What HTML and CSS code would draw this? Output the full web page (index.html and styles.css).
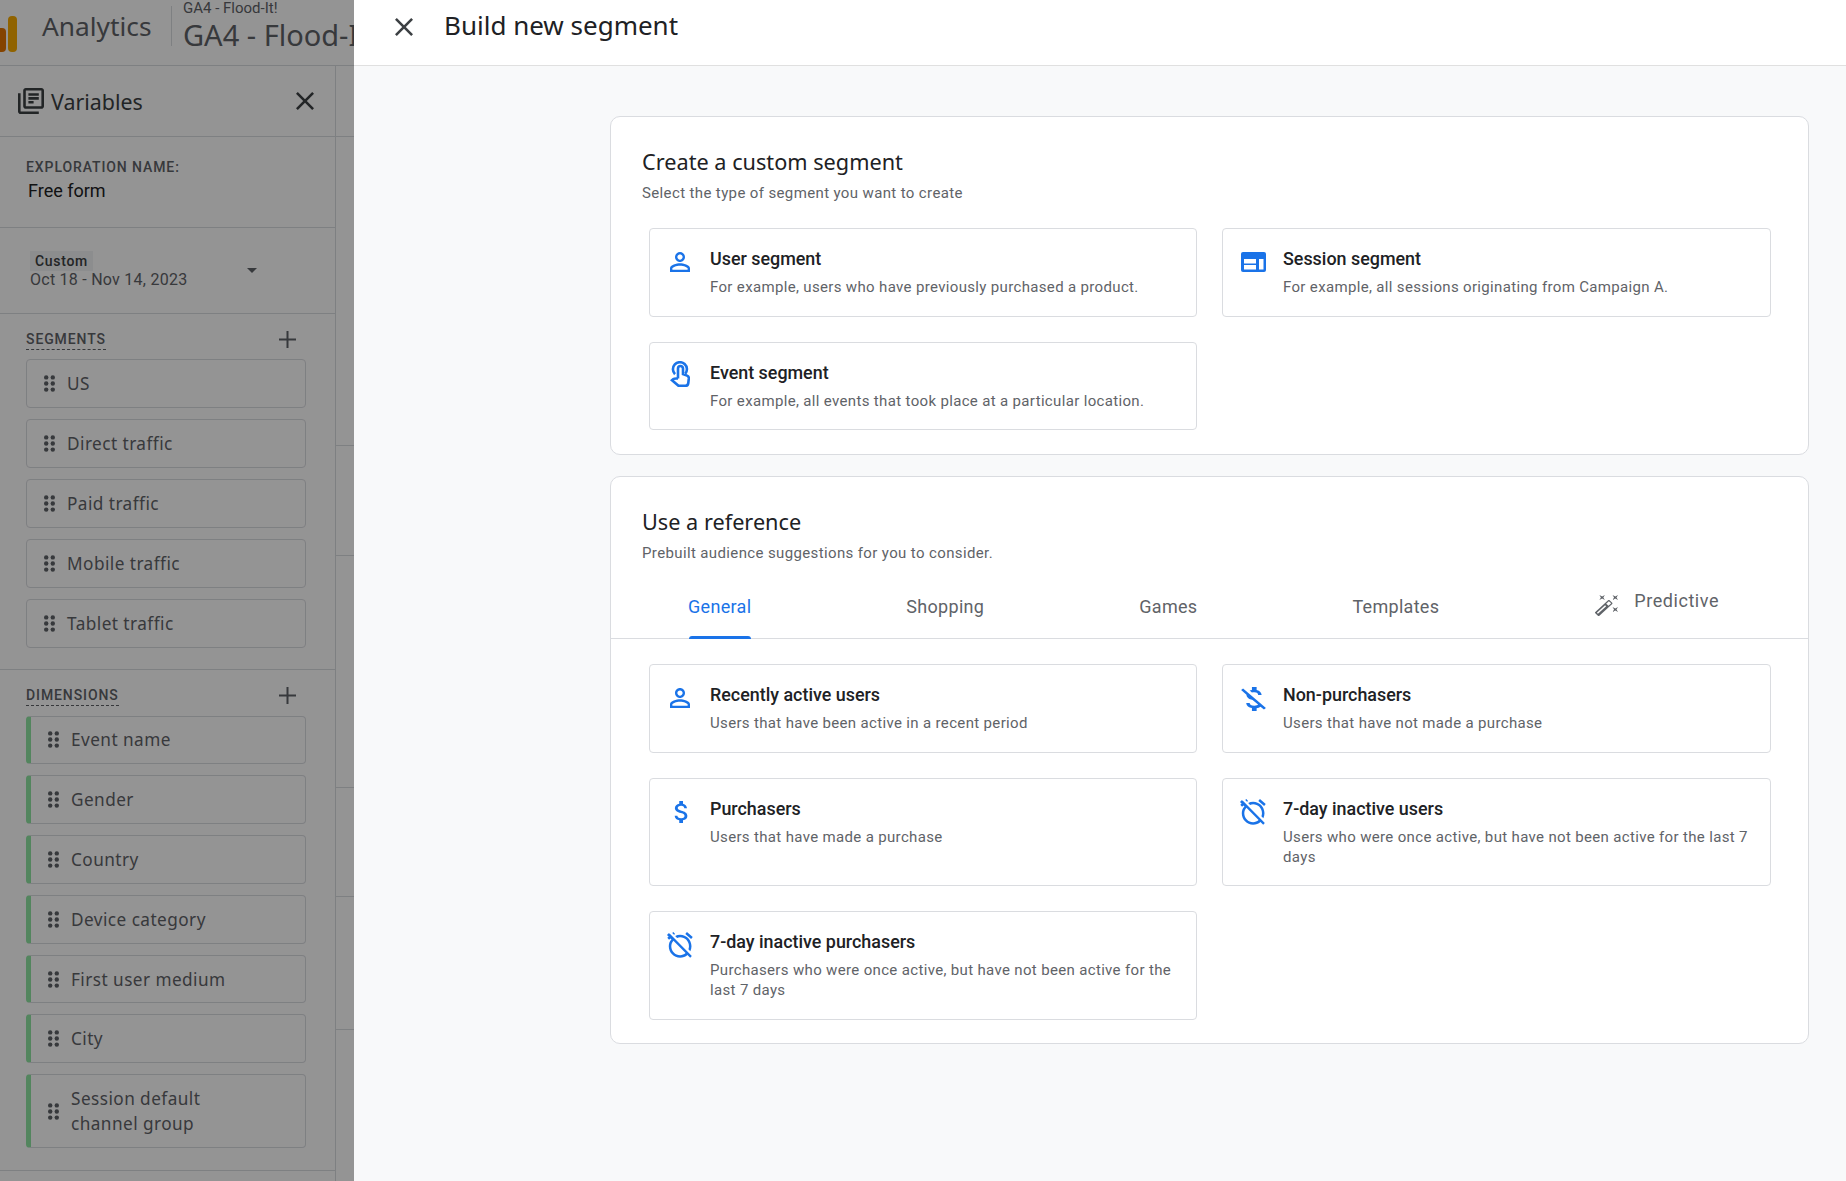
FILE: index.html
```html
<!DOCTYPE html>
<html lang="en">
<head>
<meta charset="utf-8">
<title>Build new segment</title>
<link rel="stylesheet" href="styles.css">
</head>
<body>
<div class="app">
  <div class="under">
    <header class="topbar">
      <div class="logo"><span class="bar bar-a"></span><span class="bar bar-b"></span></div>
      <span class="brand">Analytics</span>
      <div class="account">
        <span class="acc-small">GA4 - Flood-It!</span>
        <span class="acc-big">GA4 - Flood-It!</span>
      </div>
    </header>
    <div class="rail-wrap">
      <aside class="vars">
        <div class="vars-head">
          <svg class="ic-lib" viewBox="2 2 20 20"><path d="M4 6H2v14c0 1.1.9 2 2 2h14v-2H4V6zm16-4H8c-1.1 0-2 .9-2 2v12c0 1.1.9 2 2 2h12c1.1 0 2-.9 2-2V4c0-1.1-.9-2-2-2zm0 14H8V4h12v12zM10 9h8v2h-8zm0 3h4v2h-4zm0-6h8v2h-8z"/></svg>
          <span class="vars-title">Variables</span>
          <svg class="ic-x" viewBox="5 5 14 14"><path d="M19 6.41L17.59 5 12 10.59 6.41 5 5 6.41 10.59 12 5 17.59 6.41 19 12 13.41 17.59 19 19 17.59 13.41 12z"/></svg>
        </div>
        <div class="name-block">
          <div class="caps">EXPLORATION NAME:</div>
          <div class="name-val">Free form</div>
        </div>
        <div class="date-block">
          <div class="date-text">
            <span class="chip">Custom</span>
            <span class="date-val">Oct 18 - Nov 14, 2023</span>
          </div>
          <span class="caret"></span>
        </div>
        <section class="sect">
          <div class="sect-head">
            <span class="caps dashed">SEGMENTS</span>
            <svg class="ic-plus" viewBox="0 0 17 17"><path d="M7.5 0h2v7.5H17v2H9.5V17h-2V9.5H0v-2h7.5z"/></svg>
          </div>
          <div class="rows">
            <div class="row"><svg class="dots" viewBox="0 0 11 17"><circle cx="2.2" cy="2.4" r="2.2"/><circle cx="8.8" cy="2.4" r="2.2"/><circle cx="2.2" cy="8.5" r="2.2"/><circle cx="8.8" cy="8.5" r="2.2"/><circle cx="2.2" cy="14.6" r="2.2"/><circle cx="8.8" cy="14.6" r="2.2"/></svg><span class="row-t">US</span></div>
            <div class="row"><svg class="dots" viewBox="0 0 11 17"><circle cx="2.2" cy="2.4" r="2.2"/><circle cx="8.8" cy="2.4" r="2.2"/><circle cx="2.2" cy="8.5" r="2.2"/><circle cx="8.8" cy="8.5" r="2.2"/><circle cx="2.2" cy="14.6" r="2.2"/><circle cx="8.8" cy="14.6" r="2.2"/></svg><span class="row-t">Direct traffic</span></div>
            <div class="row"><svg class="dots" viewBox="0 0 11 17"><circle cx="2.2" cy="2.4" r="2.2"/><circle cx="8.8" cy="2.4" r="2.2"/><circle cx="2.2" cy="8.5" r="2.2"/><circle cx="8.8" cy="8.5" r="2.2"/><circle cx="2.2" cy="14.6" r="2.2"/><circle cx="8.8" cy="14.6" r="2.2"/></svg><span class="row-t">Paid traffic</span></div>
            <div class="row"><svg class="dots" viewBox="0 0 11 17"><circle cx="2.2" cy="2.4" r="2.2"/><circle cx="8.8" cy="2.4" r="2.2"/><circle cx="2.2" cy="8.5" r="2.2"/><circle cx="8.8" cy="8.5" r="2.2"/><circle cx="2.2" cy="14.6" r="2.2"/><circle cx="8.8" cy="14.6" r="2.2"/></svg><span class="row-t">Mobile traffic</span></div>
            <div class="row"><svg class="dots" viewBox="0 0 11 17"><circle cx="2.2" cy="2.4" r="2.2"/><circle cx="8.8" cy="2.4" r="2.2"/><circle cx="2.2" cy="8.5" r="2.2"/><circle cx="8.8" cy="8.5" r="2.2"/><circle cx="2.2" cy="14.6" r="2.2"/><circle cx="8.8" cy="14.6" r="2.2"/></svg><span class="row-t">Tablet traffic</span></div>
          </div>
        </section>
        <section class="sect sect-dim">
          <div class="sect-head">
            <span class="caps dashed">DIMENSIONS</span>
            <svg class="ic-plus" viewBox="0 0 17 17"><path d="M7.5 0h2v7.5H17v2H9.5V17h-2V9.5H0v-2h7.5z"/></svg>
          </div>
          <div class="rows">
            <div class="row dim"><svg class="dots" viewBox="0 0 11 17"><circle cx="2.2" cy="2.4" r="2.2"/><circle cx="8.8" cy="2.4" r="2.2"/><circle cx="2.2" cy="8.5" r="2.2"/><circle cx="8.8" cy="8.5" r="2.2"/><circle cx="2.2" cy="14.6" r="2.2"/><circle cx="8.8" cy="14.6" r="2.2"/></svg><span class="row-t">Event name</span></div>
            <div class="row dim"><svg class="dots" viewBox="0 0 11 17"><circle cx="2.2" cy="2.4" r="2.2"/><circle cx="8.8" cy="2.4" r="2.2"/><circle cx="2.2" cy="8.5" r="2.2"/><circle cx="8.8" cy="8.5" r="2.2"/><circle cx="2.2" cy="14.6" r="2.2"/><circle cx="8.8" cy="14.6" r="2.2"/></svg><span class="row-t">Gender</span></div>
            <div class="row dim"><svg class="dots" viewBox="0 0 11 17"><circle cx="2.2" cy="2.4" r="2.2"/><circle cx="8.8" cy="2.4" r="2.2"/><circle cx="2.2" cy="8.5" r="2.2"/><circle cx="8.8" cy="8.5" r="2.2"/><circle cx="2.2" cy="14.6" r="2.2"/><circle cx="8.8" cy="14.6" r="2.2"/></svg><span class="row-t">Country</span></div>
            <div class="row dim"><svg class="dots" viewBox="0 0 11 17"><circle cx="2.2" cy="2.4" r="2.2"/><circle cx="8.8" cy="2.4" r="2.2"/><circle cx="2.2" cy="8.5" r="2.2"/><circle cx="8.8" cy="8.5" r="2.2"/><circle cx="2.2" cy="14.6" r="2.2"/><circle cx="8.8" cy="14.6" r="2.2"/></svg><span class="row-t">Device category</span></div>
            <div class="row dim"><svg class="dots" viewBox="0 0 11 17"><circle cx="2.2" cy="2.4" r="2.2"/><circle cx="8.8" cy="2.4" r="2.2"/><circle cx="2.2" cy="8.5" r="2.2"/><circle cx="8.8" cy="8.5" r="2.2"/><circle cx="2.2" cy="14.6" r="2.2"/><circle cx="8.8" cy="14.6" r="2.2"/></svg><span class="row-t">First user medium</span></div>
            <div class="row dim"><svg class="dots" viewBox="0 0 11 17"><circle cx="2.2" cy="2.4" r="2.2"/><circle cx="8.8" cy="2.4" r="2.2"/><circle cx="2.2" cy="8.5" r="2.2"/><circle cx="8.8" cy="8.5" r="2.2"/><circle cx="2.2" cy="14.6" r="2.2"/><circle cx="8.8" cy="14.6" r="2.2"/></svg><span class="row-t">City</span></div>
            <div class="row dim tall"><svg class="dots" viewBox="0 0 11 17"><circle cx="2.2" cy="2.4" r="2.2"/><circle cx="8.8" cy="2.4" r="2.2"/><circle cx="2.2" cy="8.5" r="2.2"/><circle cx="8.8" cy="8.5" r="2.2"/><circle cx="2.2" cy="14.6" r="2.2"/><circle cx="8.8" cy="14.6" r="2.2"/></svg><span class="row-t">Session default<br>channel group</span></div>
          </div>
        </section>
      </aside>
      <div class="stub">
        <div class="stub-cell s1"></div>
        <div class="stub-cell s2"></div>
        <div class="stub-cell s3"></div>
        <div class="stub-cell s4"></div>
        <div class="stub-cell s5"></div>
        <div class="stub-cell s6"></div>
      </div>
    </div>
  </div>
  <main class="sheet">
    <header class="sheet-head">
      <svg class="ic-close" viewBox="5 5 14 14"><path d="M19 6.41L17.59 5 12 10.59 6.41 5 5 6.41 10.59 12 5 17.59 6.41 19 12 13.41 17.59 19 19 17.59 13.41 12z"/></svg>
      <h1 class="sheet-title">Build new segment</h1>
    </header>
    <div class="sheet-body">
      <section class="panel">
        <div class="panel-head">
          <h2 class="panel-title">Create a custom segment</h2>
          <p class="panel-sub">Select the type of segment you want to create</p>
        </div>
        <div class="grid">
          <article class="card">
            <div class="icon-cell"><svg class="blue" width="20" height="20" viewBox="4 4 16 16"><path d="M12 5.9c1.16 0 2.1.94 2.1 2.1s-.94 2.1-2.1 2.1S9.9 9.16 9.9 8s.94-2.1 2.1-2.1m0 9c2.97 0 6.1 1.46 6.1 2.1v1.1H5.9V17c0-.64 3.13-2.1 6.1-2.1M12 4C9.79 4 8 5.79 8 8s1.79 4 4 4 4-1.79 4-4-1.79-4-4-4zm0 9c-2.67 0-8 1.34-8 4v3h16v-3c0-2.66-5.33-4-8-4z"/></svg></div>
            <div><h3 class="card-title">User segment</h3><p class="card-desc">For example, users who have previously purchased a product.</p></div>
          </article>
          <article class="card">
            <div class="icon-cell"><svg width="25" height="20" viewBox="0 0 25 20"><rect class="blue" width="25" height="20" rx="2"/><rect class="knock" x="3" y="7" width="12" height="4.5"/><rect class="knock" x="3" y="13" width="12" height="4.5"/><rect class="knock" x="18" y="7" width="4.5" height="10.5"/></svg></div>
            <div><h3 class="card-title">Session segment</h3><p class="card-desc">For example, all sessions originating from Campaign A.</p></div>
          </article>
          <article class="card">
            <div class="icon-cell up"><svg class="stroke" width="20" height="26" viewBox="0 0 20 26"><path d="M5 13.2A7 7 0 1 1 15.2 12.8"/><path d="M8 17.5V7.5a2.5 2.5 0 0 1 5 0V13l4 1.6c1.2.5 1.9 1.5 1.8 2.8l-.5 4.6c-.2 1.6-1.2 2.8-3 2.8H8.5L2 19.2l1.4-1.2c.9-.7 3-.5 4.6-.5"/></svg></div>
            <div><h3 class="card-title">Event segment</h3><p class="card-desc">For example, all events that took place at a particular location.</p></div>
          </article>
        </div>
      </section>
      <section class="panel panel-ref">
        <div class="panel-head">
          <h2 class="panel-title">Use a reference</h2>
          <p class="panel-sub">Prebuilt audience suggestions for you to consider.</p>
        </div>
        <nav class="tabs">
          <span class="tab active">General</span>
          <span class="tab">Shopping</span>
          <span class="tab">Games</span>
          <span class="tab">Templates</span>
          <span class="tab predictive">
            <svg class="ic-wand" viewBox="1 2 21 21" preserveAspectRatio="none"><path d="M7.5 5.6L10 7 8.6 4.5 10 2 7.5 3.4 5 2l1.4 2.5L5 7zm12 9.8L17 14l1.4 2.5L17 19l2.5-1.4L22 19l-1.4-2.5L22 14zM22 2l-2.5 1.4L17 2l1.4 2.5L17 7l2.5-1.4L22 7l-1.4-2.5zm-7.63 5.29c-.39-.39-1.02-.39-1.41 0L1.29 18.96c-.39.39-.39 1.02 0 1.41l2.34 2.34c.39.39 1.02.39 1.41 0L16.7 11.05c.39-.39.39-1.02 0-1.41l-2.33-2.35zM3.7 20.7l-1-1 7.5-7.5 1 1zM13.34 12.78l-2.12-2.12 2.44-2.44 2.12 2.12-2.44 2.44z"/></svg>
            <span class="pred-t">Predictive</span>
          </span>
        </nav>
        <div class="grid">
          <article class="card">
            <div class="icon-cell"><svg class="blue" width="20" height="20" viewBox="4 4 16 16"><path d="M12 5.9c1.16 0 2.1.94 2.1 2.1s-.94 2.1-2.1 2.1S9.9 9.16 9.9 8s.94-2.1 2.1-2.1m0 9c2.97 0 6.1 1.46 6.1 2.1v1.1H5.9V17c0-.64 3.13-2.1 6.1-2.1M12 4C9.79 4 8 5.79 8 8s1.79 4 4 4 4-1.79 4-4-1.79-4-4-4zm0 9c-2.67 0-8 1.34-8 4v3h16v-3c0-2.66-5.33-4-8-4z"/></svg></div>
            <div><h3 class="card-title">Recently active users</h3><p class="card-desc">Users that have been active in a recent period</p></div>
          </article>
          <article class="card">
            <div class="icon-cell p4"><svg class="blue" width="25" height="24" viewBox="4 3 16 18" preserveAspectRatio="none"><path d="M12.5 6.9c1.78 0 2.44.85 2.5 2.1h2.21c-.07-1.72-1.12-3.3-3.21-3.81V3h-3v2.16c-.53.12-1.03.3-1.48.54l1.47 1.47c.41-.17.91-.27 1.51-.27zM5.33 4.06L4.06 5.33 7.5 8.77c0 2.08 1.56 3.21 3.91 3.91l3.51 3.51c-.34.48-1.05.91-2.42.91-2.06 0-2.87-.92-2.98-2.1h-2.2c.12 2.19 1.76 3.42 3.68 3.83V21h3v-2.15c.96-.18 1.83-.55 2.46-1.12l2.22 2.22 1.27-1.27L5.33 4.06z"/></svg></div>
            <div><h3 class="card-title">Non-purchasers</h3><p class="card-desc">Users that have not made a purchase</p></div>
          </article>
          <article class="card">
            <div class="icon-cell p4"><svg class="blue" width="15" height="22" viewBox="5 3 12 18" preserveAspectRatio="none"><path d="M11.8 10.9c-2.27-.59-3-1.2-3-2.15 0-1.09 1.01-1.85 2.7-1.85 1.78 0 2.44.85 2.5 2.1h2.21c-.07-1.72-1.12-3.3-3.21-3.81V3h-3v2.16c-1.94.42-3.5 1.68-3.5 3.61 0 2.31 1.91 3.46 4.7 4.13 2.5.6 3 1.48 3 2.41 0 .69-.49 1.79-2.7 1.79-2.06 0-2.87-.92-2.98-2.1h-2.2c.12 2.19 1.76 3.42 3.68 3.83V21h3v-2.15c1.95-.37 3.5-1.5 3.5-3.55 0-2.84-2.43-3.81-4.7-4.4z"/></svg></div>
            <div><h3 class="card-title">Purchasers</h3><p class="card-desc">Users that have made a purchase</p></div>
          </article>
          <article class="card">
            <div class="icon-cell p2"><svg class="blue" width="26" height="26" viewBox="1.6 1.8 20.6 20.4" preserveAspectRatio="none"><path d="M12 6c3.87 0 7 3.13 7 7 0 .84-.16 1.65-.43 2.4l1.52 1.52c.58-1.19.91-2.51.91-3.92 0-4.97-4.03-9-9-9-1.41 0-2.73.33-3.92.91L9.6 6.43C10.35 6.16 11.16 6 12 6zm10-.28l-4.6-3.86-1.29 1.53 4.6 3.86L22 5.72zM2.86 2.87L1.59 4.14l1.33 1.33-1.11.93 1.42 1.42 1.11-.94.8.8C3.83 8.69 3 10.75 3 13c0 4.97 4.03 9 9 9 2.25 0 4.31-.83 5.79-2.21l2.2 2.2 1.27-1.27L3.89 3.27l-1.03-.4zm13.46 15.44C15.11 19.37 13.6 20 12 20c-3.87 0-7-3.13-7-7 0-1.6.63-3.11 1.69-4.32l9.63 9.63zM8.02 3.28L6.6 1.86l-.86.71 1.42 1.42.86-.71z"/></svg></div>
            <div><h3 class="card-title">7-day inactive users</h3><p class="card-desc">Users who were once active, but have not been active for the last 7 days</p></div>
          </article>
          <article class="card">
            <div class="icon-cell p2"><svg class="blue" width="26" height="26" viewBox="1.6 1.8 20.6 20.4" preserveAspectRatio="none"><path d="M12 6c3.87 0 7 3.13 7 7 0 .84-.16 1.65-.43 2.4l1.52 1.52c.58-1.19.91-2.51.91-3.92 0-4.97-4.03-9-9-9-1.41 0-2.73.33-3.92.91L9.6 6.43C10.35 6.16 11.16 6 12 6zm10-.28l-4.6-3.86-1.29 1.53 4.6 3.86L22 5.72zM2.86 2.87L1.59 4.14l1.33 1.33-1.11.93 1.42 1.42 1.11-.94.8.8C3.83 8.69 3 10.75 3 13c0 4.97 4.03 9 9 9 2.25 0 4.31-.83 5.79-2.21l2.2 2.2 1.27-1.27L3.89 3.27l-1.03-.4zm13.46 15.44C15.11 19.37 13.6 20 12 20c-3.87 0-7-3.13-7-7 0-1.6.63-3.11 1.69-4.32l9.63 9.63zM8.02 3.28L6.6 1.86l-.86.71 1.42 1.42.86-.71z"/></svg></div>
            <div><h3 class="card-title">7-day inactive purchasers</h3><p class="card-desc">Purchasers who were once active, but have not been active for the last 7 days</p></div>
          </article>
        </div>
      </section>
    </div>
  </main>
</div>
</body>
</html>
```
FILE: styles.css
```css
* { box-sizing: border-box; }
html, body { margin: 0; height: 100%; overflow: hidden; }
body { font-family: Roboto, "Liberation Sans", sans-serif; color: #202124; background: #f8f9fa; }
h1, h2, h3, p { margin: 0; font-weight: 400; }

.app { display: flex; width: 1846px; height: 1181px; overflow: hidden; }

/* dimmed page behind the drawer */
.under { position: relative; width: 354px; flex: none; height: 1181px; overflow: hidden; background: #fff; }
.under::after { content: ""; position: absolute; inset: 0; background: rgba(0,0,0,.42); }

.topbar { height: 66px; display: flex; align-items: flex-start; border-bottom: 1px solid #dadce0; white-space: nowrap; }
.logo { width: 42px; height: 44px; margin-top: 8px; display: flex; align-items: flex-end; gap: 2px; flex: none; margin-left: -3px; }
.bar { display: block; width: 9px; border-radius: 4px; }
.bar-a { height: 24px; background: #e37400; }
.bar-b { height: 36px; background: #f9ab00; }
.brand { font-family: "Noto Sans", sans-serif; font-size: 26.3px; line-height: 52px; color: #5f6368; width: 129px; flex: none; margin-left: 3px; }
.account { height: 40px; margin-top: 6px; border-left: 1px solid #dadce0; padding-left: 11px; display: flex; flex-direction: column; }
.acc-small { font-size: 15px; line-height: 5px; color: #5f6368; }
.acc-big { font-family: "Noto Sans", sans-serif; font-size: 29px; line-height: 30px; margin-top: 9px; color: #5f6368; }

.rail-wrap { display: flex; height: 1115px; }
.vars { width: 336px; flex: none; border-right: 1px solid #dadce0; }
.stub { flex: 1; }
.stub-cell { border-bottom: 1px solid #dadce0; }
.s1 { height: 71px; }
.s2 { height: 309px; }
.s3 { height: 110px; }
.s4 { height: 232px; }
.s5 { height: 109px; }
.s6 { height: 133px; }

.vars-head { height: 71px; display: flex; align-items: center; padding-left: 18px; border-bottom: 1px solid #dadce0; }
.ic-lib { width: 26px; height: 26px; fill: #3c4043; flex: none; }
.vars-title { font-family: "Noto Sans", sans-serif; font-size: 21.4px; color: #3c4043; margin-left: 7px; width: 245px; }
.ic-x { width: 18px; height: 18px; fill: #3c4043; }

.name-block { height: 91px; padding: 21px 0 0 26px; border-bottom: 1px solid #dadce0; }
.caps { font-size: 14px; font-weight: 500; letter-spacing: .9px; color: #5f6368; line-height: 18px; }
.name-val { font-size: 18px; line-height: 24px; margin: 3px 0 0 2px; color: #202124; }

.date-block { height: 86px; padding: 23px 0 0 30px; display: flex; border-bottom: 1px solid #dadce0; }
.date-text { display: flex; flex-direction: column; align-items: flex-start; width: 217px; }
.chip { background: #f1f3f4; font-size: 14px; font-weight: 500; letter-spacing: .7px; line-height: 20px; padding: 0 5px; color: #3c4043; }
.date-val { font-size: 16px; line-height: 18px; color: #5f6368; letter-spacing: .25px; }
.caret { width: 0; height: 0; border-left: 5px solid transparent; border-right: 5px solid transparent; border-top: 5px solid #5f6368; margin-top: 17px; }

.sect { padding: 15px 29px 20px 26px; border-bottom: 1px solid #dadce0; height: 356px; }
.sect-dim { height: 501px; }
.sect-head { display: flex; justify-content: space-between; align-items: center; height: 21px; padding-right: 10px; margin-bottom: 9px; }
.sect-dim .sect-head { margin-bottom: 9.5px; }
.dashed { border-bottom: 1px dashed #5f6368; line-height: 20px; height: 21px; display: inline-block; }
.ic-plus { width: 17px; height: 17px; fill: #5f6368; }

.rows { display: flex; flex-direction: column; gap: 11px; }
.row { min-height: 49px; display: flex; align-items: center; border: 1px solid #dadce0; border-radius: 4px; padding-left: 17px; }
.dots { width: 11px; height: 17px; fill: #5f6368; flex: none; }
.row-t { font-family: "Noto Sans", sans-serif; font-size: 17.2px; letter-spacing: .45px; line-height: 25px; margin-left: 12px; color: #5f6368; }
.dim { min-height: 48.8px; border-left: 5px solid #8fe6a2; padding-left: 17px; }
.tall { padding: 11px 0 11px 17px; }

/* sheet */
.sheet { flex: 1; min-width: 0; background: #f8f9fa; }
.sheet-head { height: 66px; background: #fff; border-bottom: 1px solid #e0e0e0; display: flex; align-items: flex-start; padding-left: 41px; }
.ic-close { width: 18px; height: 18px; fill: #3c4043; margin-top: 18px; flex: none; }
.sheet-title { font-family: "Noto Sans", sans-serif; font-size: 26px; line-height: 50px; margin-left: 31px; color: #202124; }
.sheet-body { padding: 50px 37px 0 256px; }

.panel { background: #fff; border: 1px solid #dadce0; border-radius: 10px; height: 339px; }
.panel-ref { margin-top: 21px; height: 568px; }
.panel-head { padding: 30px 30px 0 31px; height: 111px; }
.panel-ref .panel-head { height: 108px; }
.panel-title { font-family: "Noto Sans", sans-serif; font-size: 21.7px; line-height: 30px; color: #202124; }
.panel-sub { font-size: 15px; letter-spacing: .37px; line-height: 20px; margin-top: 6px; color: #5f6368; }

.grid { display: grid; grid-template-columns: 548px 549px; column-gap: 25px; row-gap: 25px; padding-left: 38px; align-items: stretch; }
.card { display: flex; border: 1px solid #dadce0; border-radius: 4px; min-height: 88px; padding: 18px 14px 18.5px 0; }
.icon-cell { width: 60px; flex: none; display: flex; justify-content: center; align-items: flex-start; padding-top: 5px; }
.icon-cell.up { padding-top: 0; }
.icon-cell.p2 { padding-top: 2px; }
.icon-cell.p4 { padding-top: 4px; }
.blue { fill: #1a73e8; }
.knock { fill: #fff; }
.stroke { fill: none; stroke: #1a73e8; stroke-width: 2.6; }
.card-title { font-size: 17.9px; font-weight: 500; line-height: 24px; color: #202124; }
.card-desc { font-size: 15px; letter-spacing: .34px; line-height: 20px; margin-top: 6px; color: #5f6368; }

.tabs { display: flex; gap: 155px; height: 54px; padding: 0 0 0 77px; border-bottom: 1px solid #dadce0; margin-bottom: 25px; }
.tab { font-size: 18px; line-height: 22px; padding-top: 11px; color: #5f6368; letter-spacing: .3px; height: 53px; position: relative; }
.tab.active { color: #1a73e8; }
.tab.active::after { content: ""; position: absolute; left: 1px; right: 0; bottom: -1px; height: 3px; background: #1a73e8; border-radius: 3px 3px 0 0; }
.predictive { display: flex; align-items: flex-start; padding-top: 0; margin-left: 1px; }
.ic-wand { width: 23px; height: 21px; fill: #5f6368; margin-top: 10px; flex: none; }
.pred-t { margin-left: 16px; margin-top: 5px; letter-spacing: .55px; }
```
